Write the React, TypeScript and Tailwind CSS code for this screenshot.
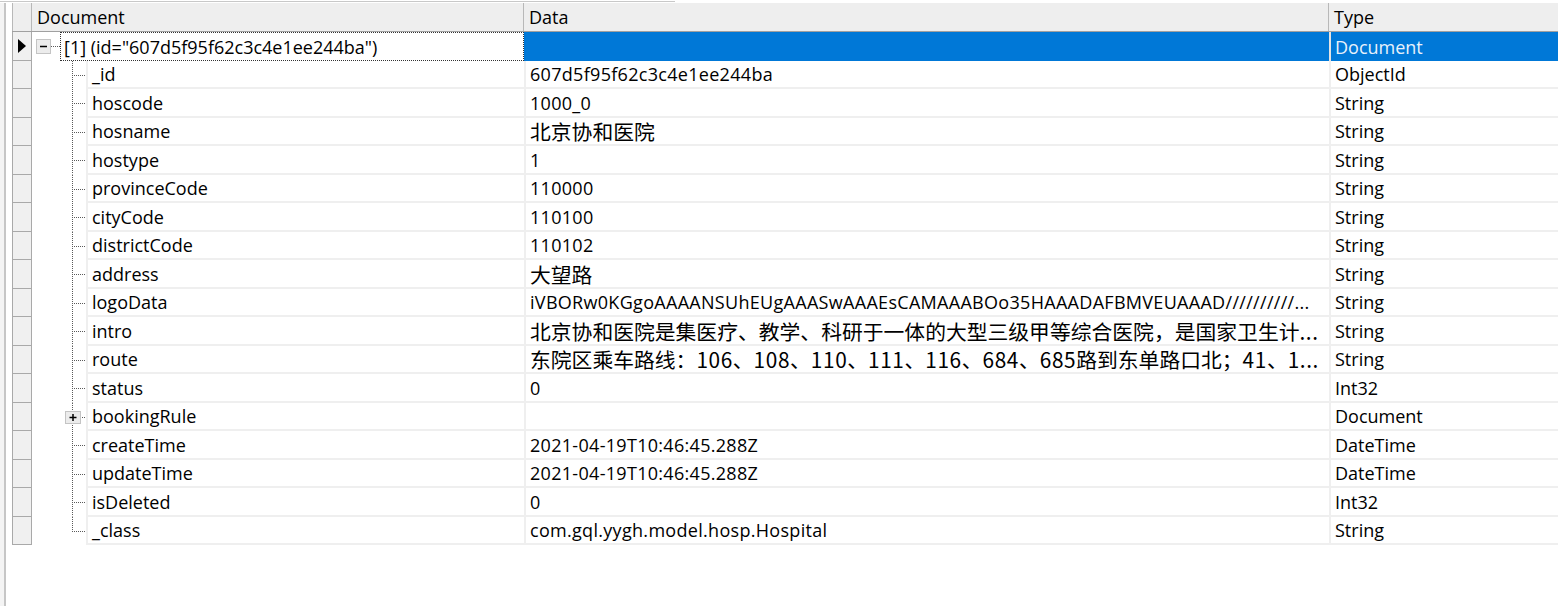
import React from "react";

type FieldRow = {
  name: string;
  data: string;
  type: string;
  expandable?: boolean;
};

const FIELDS: FieldRow[] = [
  { name: "_id", data: "607d5f95f62c3c4e1ee244ba", type: "ObjectId" },
  { name: "hoscode", data: "1000_0", type: "String" },
  { name: "hosname", data: "北京协和医院", type: "String" },
  { name: "hostype", data: "1", type: "String" },
  { name: "provinceCode", data: "110000", type: "String" },
  { name: "cityCode", data: "110100", type: "String" },
  { name: "districtCode", data: "110102", type: "String" },
  { name: "address", data: "大望路", type: "String" },
  {
    name: "logoData",
    data: "iVBORw0KGgoAAAANSUhEUgAAASwAAAEsCAMAAABOo35HAAADAFBMVEUAAAD//////////...",
    type: "String"
  },
  {
    name: "intro",
    data: "北京协和医院是集医疗、教学、科研于一体的大型三级甲等综合医院，是国家卫生计...",
    type: "String"
  },
  {
    name: "route",
    data: "东院区乘车路线：106、108、110、111、116、684、685路到东单路口北；41、1...",
    type: "String"
  },
  { name: "status", data: "0", type: "Int32" },
  { name: "bookingRule", data: "", type: "Document", expandable: true },
  { name: "createTime", data: "2021-04-19T10:46:45.288Z", type: "DateTime" },
  { name: "updateTime", data: "2021-04-19T10:46:45.288Z", type: "DateTime" },
  { name: "isDeleted", data: "0", type: "Int32" },
  { name: "_class", data: "com.gql.yygh.model.hosp.Hospital", type: "String" }
];

const CJK = /[\u3000-\u303f\u4e00-\u9fff\uff00-\uffef]/;

// a value with any CJK in it is drawn wholly in the CJK face, like the grid does
function CellText({ text }: { text: string }) {
  if (!CJK.test(text)) {
    return <span className="tracking-[0.3px]">{text}</span>;
  }
  const parts = text.match(/[\u3000-\u303f\u4e00-\u9fff\uff00-\uffef]+|[^\u3000-\u303f\u4e00-\u9fff\uff00-\uffef]+/g) ?? [];
  return (
    <span className="font-['Noto_Sans_CJK_SC',sans-serif] text-[20.8px] leading-[24px]">
      {parts.map((part, index) =>
        CJK.test(part) ? (
          <span key={index}>{part}</span>
        ) : (
          <span key={index} className="tracking-[0.6px]">
            {part}
          </span>
        )
      )}
    </span>
  );
}

function SelectorCell({ current }: { current?: boolean }) {
  return (
    <div className="flex w-[20px] shrink-0 items-center justify-center border-b border-l border-r border-[#a9a9a9] border-t-white bg-[#f0f0f0]">
      {current ? (
        <svg width="8" height="14" viewBox="0 0 8 14">
          <path d="M0 0 L8 7 L0 14 Z" fill="#000" />
        </svg>
      ) : null}
    </div>
  );
}

function TreeGutter({ last, expandable }: { last: boolean; expandable?: boolean }) {
  return (
    <svg width="54" height="28.5" viewBox="0 0 54 28.5" className="shrink-0">
      <line
        x1="40.5"
        y1="0"
        x2="40.5"
        y2={last ? 14.5 : 28.5}
        stroke="#5a5a5a"
        strokeWidth="1"
        strokeDasharray="1 1"
      />
      <line x1="40" y1="14.5" x2="54" y2="14.5" stroke="#5a5a5a" strokeWidth="1" strokeDasharray="1 1" />
      {expandable ? (
        <g>
          <rect x="33.5" y="8.5" width="15" height="12" fill="#ececec" stroke="#c4c4c4" />
          <line x1="37.5" y1="14.5" x2="44.5" y2="14.5" stroke="#000" strokeWidth="1.5" />
          <line x1="41" y1="11" x2="41" y2="18" stroke="#000" strokeWidth="1.5" />
        </g>
      ) : null}
    </svg>
  );
}

function FieldLine({ row, last }: { row: FieldRow; last: boolean }) {
  return (
    <div className="flex h-[28.5px] leading-[22px]">
      <SelectorCell />
      <div className="flex w-[492px] shrink-0">
        <TreeGutter last={last} expandable={row.expandable} />
        <div className="flex flex-1 items-center border-b-2 border-l-2 border-[#efefef] pl-[4px] pt-px text-black">
          {row.name}
        </div>
      </div>
      <div className="flex w-[805px] shrink-0 items-center overflow-hidden whitespace-nowrap border-b-2 border-l-2 border-[#efefef] pl-[4px] pt-px text-black">
        <CellText text={row.data} />
      </div>
      <div className="flex flex-1 items-center border-b-2 border-l-2 border-[#efefef] pl-[4px] pt-px text-black">
        {row.type}
      </div>
    </div>
  );
}

function RootLine() {
  return (
    <div className="flex h-[28.5px] leading-[22px]">
      <SelectorCell current />
      <div className="flex w-[492px] shrink-0 items-center">
        <svg width="28" height="28.5" viewBox="0 0 28 28.5" className="shrink-0">
          <rect x="4.5" y="7.5" width="14" height="14" fill="#ececec" stroke="#c4c4c4" />
          <line x1="8" y1="14.5" x2="15" y2="14.5" stroke="#000" strokeWidth="1.5" />
          <line x1="19" y1="14.5" x2="28" y2="14.5" stroke="#5a5a5a" strokeDasharray="1 1" />
        </svg>
        <div className="flex h-full flex-1 items-center border border-dotted border-[#333] pl-[3px] pt-px text-black">
          [1] (id="607d5f95f62c3c4e1ee244ba")
        </div>
      </div>
      <div className="w-[805px] shrink-0 bg-[#0078d7]" />
      <div className="flex flex-1 items-center border-l-2 border-[#e3e3e3] bg-[#0078d7] pl-[4px] pt-px text-[#e8f1fb]">
        Document
      </div>
    </div>
  );
}

export default function App() {
  return (
    <div className="flex h-[606px] w-[1558px] flex-col overflow-hidden bg-white font-['Open_Sans','Noto_Sans_CJK_SC',sans-serif] text-[18px]">
      <div className="h-[3px] shrink-0 pt-px">
        <div className="h-px w-[675px] bg-[#c8c8c8]" />
      </div>
      <div className="flex flex-1">
        <div className="flex w-[12px] shrink-0">
          <div className="w-[4px] bg-[#f4f4f4]" />
          <div className="w-[2px] bg-[#c6c6c6]" />
        </div>
        <div className="flex flex-1 flex-col">
          <div className="flex h-[29px] shrink-0 border-b border-[#a0a0a0] bg-[#eeeeee] leading-[22px] text-black">
            <div className="w-[20px] shrink-0 border-l border-r border-[#b8b8b8]" />
            <div className="flex w-[492px] shrink-0 items-center border-r border-[#b8b8b8] pl-[5px]">Document</div>
            <div className="flex w-[805px] shrink-0 items-center border-r border-[#b8b8b8] pl-[5px]">Data</div>
            <div className="flex flex-1 items-center pl-[5px]">Type</div>
          </div>
          <RootLine />
          {FIELDS.map((row, index) => (
            <FieldLine key={row.name} row={row} last={index === FIELDS.length - 1} />
          ))}
        </div>
      </div>
    </div>
  );
}
